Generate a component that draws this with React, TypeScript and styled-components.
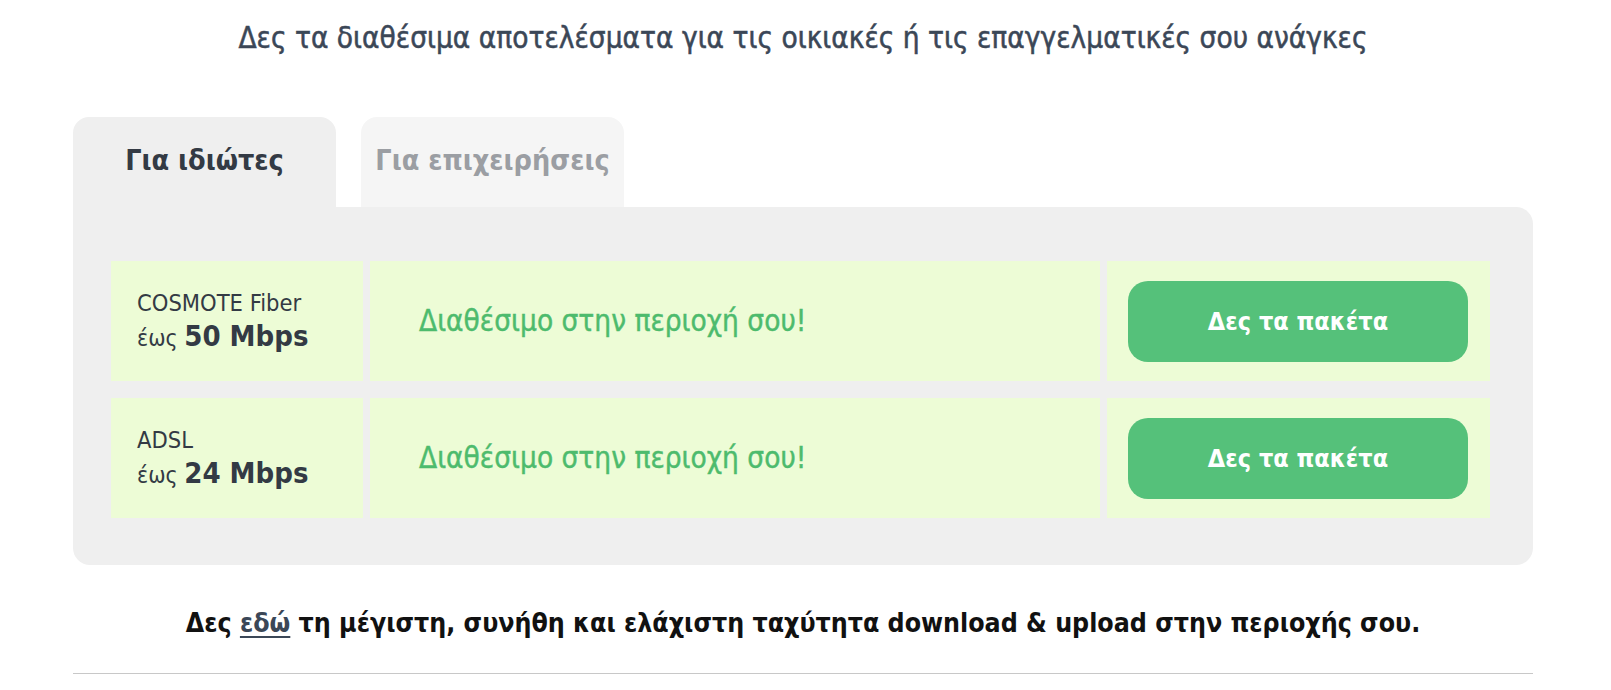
import React, { FC, useState } from 'react';
import styled, { createGlobalStyle } from 'styled-components';

const GlobalStyle = createGlobalStyle`
  body {
    margin: 0;
    background: #fff;
    font-family: 'DejaVu Sans Condensed', 'DejaVu Sans', 'Liberation Sans', sans-serif;
    font-stretch: condensed;
  }
`;

type Offer = {
  name: string;
  speed: string;
};

const offers: Offer[] = [
  { name: 'COSMOTE Fiber', speed: '50 Mbps' },
  { name: 'ADSL', speed: '24 Mbps' }
];

const tabs = ['Για ιδιώτες', 'Για επιχειρήσεις'];

const App: FC = () => {
  const [active, setActive] = useState(0);

  return (
    <StyledPage>
      <GlobalStyle />
      <StyledHeading>
        Δες τα διαθέσιμα αποτελέσματα για τις οικιακές ή τις επαγγελματικές σου ανάγκες
      </StyledHeading>

      <StyledTabs>
        {tabs.map((label, i) => (
          <StyledTab key={label} active={i === active} onClick={() => setActive(i)}>
            {label}
          </StyledTab>
        ))}
      </StyledTabs>

      <StyledPanel>
        {offers.map((offer) => (
          <StyledRow key={offer.name}>
            <StyledProductCell>
              <StyledProductName>{offer.name}</StyledProductName>
              <StyledSpeed>
                έως <strong>{offer.speed}</strong>
              </StyledSpeed>
            </StyledProductCell>
            <StyledStatusCell>Διαθέσιμο στην περιοχή σου!</StyledStatusCell>
            <StyledActionCell>
              <StyledButton type="button">Δες τα πακέτα</StyledButton>
            </StyledActionCell>
          </StyledRow>
        ))}
      </StyledPanel>

      <StyledNote>
        Δες <a href="#speeds">εδώ</a> τη μέγιστη, συνήθη και ελάχιστη ταχύτητα download &amp; upload
        στην περιοχής σου.
      </StyledNote>
      <StyledDivider />
    </StyledPage>
  );
};

export default App;

const StyledPage = styled.main`
  width: 1460px;
  margin-left: 73px;
  padding-top: 21px;
`;

const StyledHeading = styled.h2`
  margin: 0 0 62px;
  text-align: center;
  font-size: 29.5px;
  line-height: 34px;
  font-weight: 400;
  color: #3b4757;
  -webkit-text-stroke: 0.5px #3b4757;
`;

const StyledTabs = styled.div`
  display: flex;
  gap: 25px;
`;

const StyledTab = styled.button<{ active: boolean }>`
  width: 263px;
  height: 90px;
  border: 0;
  border-radius: 16px 16px 0 0;
  font-family: inherit;
  font-stretch: condensed;
  font-size: 28.5px;
  font-weight: 700;
  cursor: pointer;
  background: ${(props) => (props.active ? '#efefef' : '#f5f5f5')};
  color: ${(props) => (props.active ? '#333a44' : '#9b9ea3')};
  padding: 0 0 4px;
`;

const StyledPanel = styled.section`
  background: #efefef;
  border-radius: 0 17px 17px 17px;
  padding: 54px 43px 47px 38px;
  display: flex;
  flex-direction: column;
  gap: 17px;
`;

const StyledRow = styled.div`
  display: grid;
  grid-template-columns: 252px 1fr 383px;
  column-gap: 7px;
  height: 120px;
`;

const StyledCell = styled.div`
  background: #edfcd6;
  display: flex;
`;

const StyledProductCell = styled(StyledCell)`
  flex-direction: column;
  justify-content: center;
  padding: 0 0 0 26px;
  color: #333a44;
`;

const StyledProductName = styled.span`
  font-size: 23.5px;
  line-height: 32px;
`;

const StyledSpeed = styled.span`
  font-size: 23px;
  line-height: 34px;

  strong {
    font-size: 29px;
    font-weight: 700;
  }
`;

const StyledStatusCell = styled(StyledCell)`
  align-items: center;
  padding-left: 49px;
  font-size: 29.5px;
  color: #4dbb6d;
  -webkit-text-stroke: 0.4px #4dbb6d;
`;

const StyledActionCell = styled(StyledCell)`
  align-items: center;
  padding: 0 22px 0 21px;
`;

const StyledButton = styled.button`
  width: 100%;
  height: 81px;
  border: 0;
  border-radius: 20px;
  background: #55c17a;
  color: #fff;
  font-family: inherit;
  font-stretch: condensed;
  font-size: 25px;
  font-weight: 700;
  cursor: pointer;
`;

const StyledNote = styled.p`
  margin: 42px 0 0;
  text-align: center;
  font-size: 26.5px;
  line-height: 32px;
  font-weight: 700;
  color: #111;

  a {
    color: #3b4757;
    text-decoration: underline;
    text-underline-offset: 4px;
  }
`;

const StyledDivider = styled.hr`
  margin: 34px 0 0;
  border: 0;
  border-top: 1px solid #c8c8c8;
`;
